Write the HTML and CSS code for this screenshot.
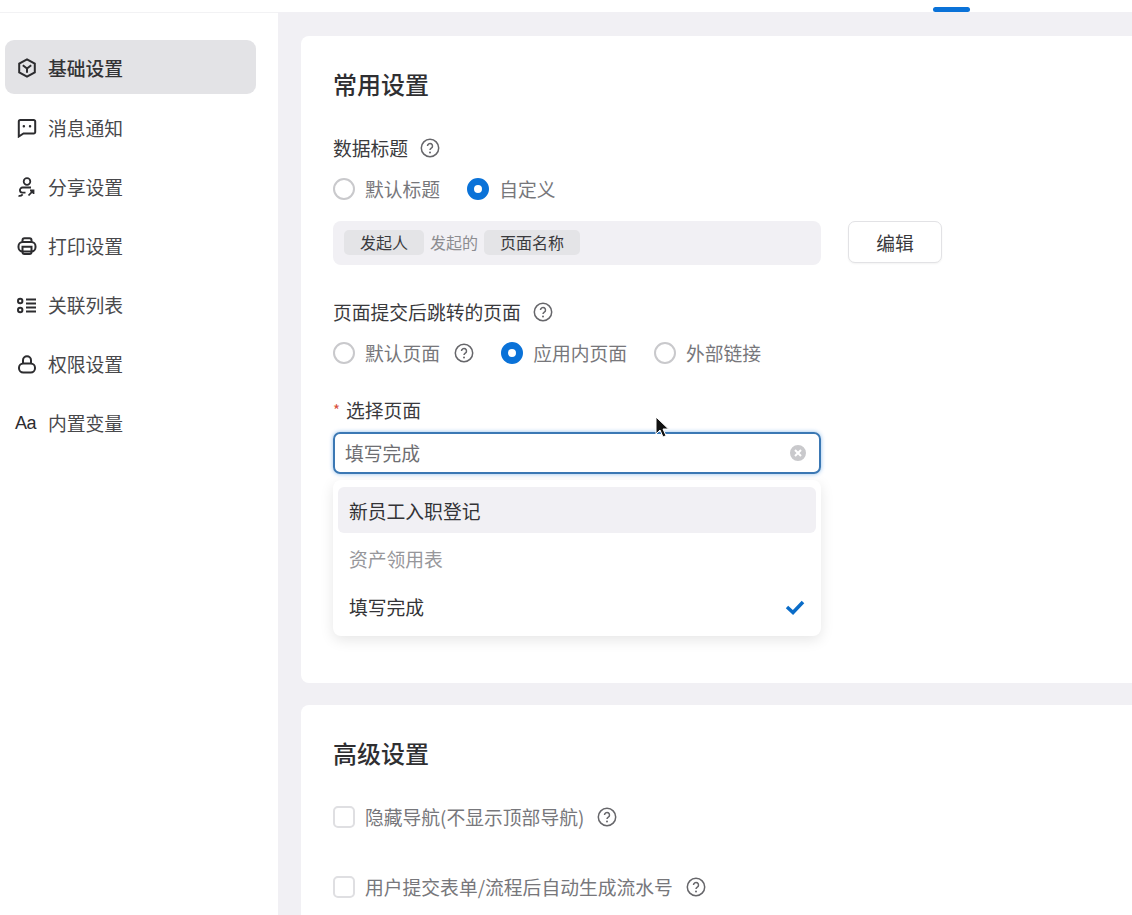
FILE: index.html
```html
<!DOCTYPE html>
<html lang="zh-CN">
<head>
    <meta charset="UTF-8">
    <title>基础设置</title>
    <link rel="stylesheet" href="styles.css">
</head>
<body>
<div class="top"><span class="top-line"></span></div>
<div class="layout">
    <ul class="side">
        <li class="side-item active">
            <svg class="side-icon" viewBox="0 0 20 20"><path d="M10 1.300l7.800 4.400v8.600L10 18.700l-7.800-4.400V5.700z"/><path d="M5.800 7.300L10 10.500l4.200-3.200M10 10.500v4.300"/></svg>
            基础设置
        </li>
        <li class="side-item">
            <svg class="side-icon" viewBox="0 0 20 20"><path d="M3.300 2h13.400a1.500 1.500 0 0 1 1.500 1.500v10.500a1.500 1.500 0 0 1-1.500 1.500H6.500l-4.700 3V3.500A1.500 1.500 0 0 1 3.300 2z"/><path class="dot" d="M6.800 8.300h.1M13 8.300h.1"/></svg>
            消息通知
        </li>
        <li class="side-item">
            <svg class="side-icon thin" viewBox="0 0 20 20"><circle cx="10" cy="4.500" r="3.300"/><path d="M14 10.500H5.500a2.600 2.600 0 0 0 0 5.200h3"/><path d="M1.500 18.800c1.700.5 3-.2 4.200-1.500M11.500 18.500l4-4.200M13 13.500h3.500V17"/></svg>
            分享设置
        </li>
        <li class="side-item">
            <svg class="side-icon" viewBox="0 0 20 20"><path d="M5.500 6.500V4.300a2 2 0 0 1 2-2h5a2 2 0 0 1 2 2v2.200"/><rect x="1.500" y="6" width="17" height="9.500" rx="4.200"/><path d="M5.500 10.800h9v5.200a2 2 0 0 1-2 2h-5a2 2 0 0 1-2-2z"/></svg>
            打印设置
        </li>
        <li class="side-item">
            <svg class="side-icon" viewBox="0 0 20 20"><circle cx="3.200" cy="6" r="2.200"/><circle cx="3.200" cy="15" r="2.200"/><path d="M9 4.500h10M9 8.500h10M9 12.500h10M9 16.500h10"/></svg>
            关联列表
        </li>
        <li class="side-item">
            <svg class="side-icon" viewBox="0 0 20 20"><path d="M6 9.500V6.200a4 4 0 0 1 8 0v3.300"/><rect x="2" y="9.500" width="16" height="9" rx="4.300"/></svg>
            权限设置
        </li>
        <li class="side-item">
            <span class="side-aa">Aa</span>
            内置变量
        </li>
    </ul>

    <div class="main">
        <section class="card card-common">
            <h2 class="card-title">常用设置</h2>

            <div class="label label-first">数据标题 <svg class="help" viewBox="0 0 20 20"><use href="#help"/></svg></div>
            <div class="radios">
                <span class="radio"></span><span class="radio-text">默认标题</span>
                <span class="radio on"></span><span class="radio-text">自定义</span>
            </div>
            <div class="title-row">
                <div class="tokens">
                    <span class="token">发起人</span>
                    <span class="token-text">发起的</span>
                    <span class="token">页面名称</span>
                </div>
                <button class="btn">编辑</button>
            </div>

            <div class="label label-second">页面提交后跳转的页面 <svg class="help" viewBox="0 0 20 20"><use href="#help"/></svg></div>
            <div class="radios">
                <span class="radio"></span><span class="radio-text">默认页面</span>
                <svg class="help help-radio" viewBox="0 0 20 20"><use href="#help"/></svg>
                <span class="radio on"></span><span class="radio-text">应用内页面</span>
                <span class="radio"></span><span class="radio-text">外部链接</span>
            </div>

            <div class="label label-third"><span class="star">*</span>选择页面</div>
            <div class="select">
                <span>填写完成</span>
                <svg class="clear" viewBox="0 0 18 18"><circle cx="9" cy="9" r="9"/><path d="M6 6l6 6M12 6l-6 6"/></svg>
            </div>
            <ul class="dropdown">
                <li class="option hover">新员工入职登记</li>
                <li class="option off">资产领用表</li>
                <li class="option picked">填写完成
                    <svg class="check" viewBox="0 0 20 16"><path d="M2 8l6 5.500L18 3"/></svg>
                </li>
            </ul>
        </section>

        <section class="card card-advanced">
            <h2 class="card-title">高级设置</h2>
            <div class="check-row check-row-first">
                <span class="checkbox"></span><span class="radio-text">隐藏导航(不显示顶部导航)</span>
                <svg class="help" viewBox="0 0 20 20"><use href="#help"/></svg>
            </div>
            <div class="check-row">
                <span class="checkbox"></span><span class="radio-text">用户提交表单/流程后自动生成流水号</span>
                <svg class="help" viewBox="0 0 20 20"><use href="#help"/></svg>
            </div>
        </section>
    </div>
</div>

<svg class="cursor" viewBox="0 0 14 24"><path d="M1 1v17l4-4 3 7 3-1.300-3-6.700h5.500z"/></svg>

<svg class="defs" width="0" height="0">
    <symbol id="help" viewBox="0 0 20 20">
        <circle cx="10" cy="10" r="8.700" fill="none" stroke="currentColor" stroke-width="1.500"/>
        <path d="M7.500 8a2.500 2.500 0 1 1 3.800 2.100c-.9.600-1.300 1-1.300 2" fill="none" stroke="currentColor" stroke-width="1.500"/>
        <circle cx="10" cy="14.600" r="1" fill="currentColor"/>
    </symbol>
</svg>
</body>
</html>
```

FILE: styles.css
```css
*{
    margin: 0;
    padding: 0;
    box-sizing: border-box;
}
html,body{
    height: 915px;
    overflow: hidden;
}
body{
    font-family: "Noto Sans CJK SC", "Liberation Sans", sans-serif;
    font-size: 18.8px;
    color: #3a3a3d;
    background: #f1f0f4;
    position: relative;
}
ul{
    list-style: none;
}

/* top bar */
.top{
    height: 12px;
    background: #fff;
    position: relative;
}
.top-line{
    width: 37px;
    height: 5px;
    background: #0a72d8;
    border-radius: 3px;
    position: absolute;
    left: 933px;
    top: 7px;
}
.layout{
    display: flex;
    height: 903px;
}

/* left menu */
.side{
    width: 278px;
    flex-shrink: 0;
    background: #fff;
    border-top: 1px solid #f2f2f4;
    padding: 27px 22px 0 5px;
    display: flex;
    flex-direction: column;
    gap: 5px;
}
.side-item{
    height: 54px;
    border-radius: 9px;
    padding: 2px 0 0 12px;
    display: flex;
    align-items: center;
    gap: 11px;
    color: #48484b;
    line-height: 1;
}
.side-item.active{
    background: #e3e3e6;
    color: #333336;
    font-weight: 500;
    margin-bottom: 1px;
}
.side-icon{
    width: 20px;
    height: 20px;
    fill: none;
    stroke: #2c2c2f;
    stroke-width: 2;
    flex-shrink: 0;
}
.side-icon.thin{
    stroke-width: 1.800;
}
.side-icon .dot{
    stroke-width: 2.400;
    stroke-linecap: round;
}
.side-aa{
    width: 20px;
    font-size: 18px;
    font-family: "Liberation Sans", sans-serif;
    color: #2c2c2f;
    letter-spacing: -0.5px;
    margin-left: -2px;
    margin-right: 2px;
}

/* content */
.main{
    flex: 1;
    padding: 24px 0 0 23px;
    min-width: 0;
}
.card{
    background: #fff;
    border-radius: 8px 0 0 8px;
    padding: 32px 0 0 32px;
}
.card-common{
    height: 647px;
    margin-bottom: 22px;
}
.card-advanced{
    height: 210px;
    border-radius: 8px 0 0 0;
}
.card-title{
    font-size: 24px;
    font-weight: 500;
    line-height: 32px;
    color: #2f2f32;
}
.label{
    line-height: 24px;
    display: flex;
    align-items: center;
    gap: 12px;
}
.label-first{
    margin-top: 36px;
}
.label-second{
    margin-top: 35px;
}
.label-third{
    margin-top: 33px;
    gap: 0;
}
.star{
    color: #d9503c;
    font-size: 15px;
    width: 13px;
    line-height: 18px;
}
.help{
    width: 20px;
    height: 20px;
    color: #66666a;
    flex-shrink: 0;
}
.help-radio{
    margin-left: -13px;
    margin-right: 27px;
}
.defs{
    position: absolute;
}

/* radios */
.radios{
    height: 24px;
    margin-top: 17px;
    display: flex;
    align-items: center;
}
.radio{
    width: 22px;
    height: 22px;
    border: 2px solid #c9c9cc;
    border-radius: 50%;
    background: #fff;
    flex-shrink: 0;
}
.radio.on{
    border: 7px solid #0a72d8;
}
.radio-text{
    color: #77777b;
    margin-left: 10px;
    margin-right: 27px;
    line-height: 24px;
    white-space: nowrap;
}

/* data title */
.title-row{
    margin-top: 20px;
    display: flex;
    align-items: flex-start;
    gap: 27px;
}
.tokens{
    width: 488px;
    height: 44px;
    background: #f1f0f4;
    border-radius: 8px;
    padding: 0 0 1px 11px;
    display: flex;
    align-items: center;
    gap: 6px;
    font-size: 16px;
    line-height: 25px;
}
.token{
    background: #e4e4e7;
    border-radius: 5px;
    padding: 0 16px;
    color: #3a3a3d;
}
.token-text{
    color: #8c8c90;
}
.btn{
    width: 94px;
    height: 42px;
    background: #fff;
    border: 1px solid #e2e2e5;
    border-radius: 7px;
    font: inherit;
    color: #3a3a3d;
    box-shadow: 0 1px 2px rgba(0,0,0,.05);
}

/* select */
.select{
    width: 488px;
    height: 42px;
    margin-top: 10px;
    border: 2px solid #3b78b4;
    border-radius: 7px;
    box-shadow: 0 0 4px rgba(10,114,216,.45);
    padding: 0 12px 2px 10px;
    display: flex;
    align-items: center;
    justify-content: space-between;
    color: #6e6e72;
}
.clear{
    width: 18px;
    height: 18px;
    margin-top: 2px;
    fill: #c9c9cc;
    stroke: #fff;
    stroke-width: 2;
}
.dropdown{
    width: 488px;
    height: 156px;
    margin-top: 6px;
    padding: 7px 5px 0;
    background: #fff;
    border-radius: 8px;
    box-shadow: 0 4px 14px rgba(0,0,0,.1);
}
.option{
    height: 48px;
    padding: 0 11px;
    border-radius: 6px;
    display: flex;
    align-items: center;
    justify-content: space-between;
    color: #333336;
}
.option.hover{
    height: 46px;
    margin-bottom: 1px;
    background: #f1f0f4;
}
.option.off{
    color: #97979b;
}
.check{
    width: 20px;
    height: 16px;
    margin-top: 2px;
    fill: none;
    stroke: #0a6cc8;
    stroke-width: 3.500;
}

/* checkboxes */
.check-row{
    height: 24px;
    margin-top: 46px;
    display: flex;
    align-items: center;
}
.check-row-first{
    margin-top: 36px;
}
.checkbox{
    width: 22px;
    height: 22px;
    border: 2px solid #dfdfe2;
    border-radius: 5px;
    flex-shrink: 0;
}
.check-row .radio-text{
    margin-right: 13px;
}

.cursor{
    width: 14px;
    height: 24px;
    fill: #111;
    stroke: #fff;
    stroke-width: 1;
    position: absolute;
    left: 655px;
    top: 416px;
}
```
